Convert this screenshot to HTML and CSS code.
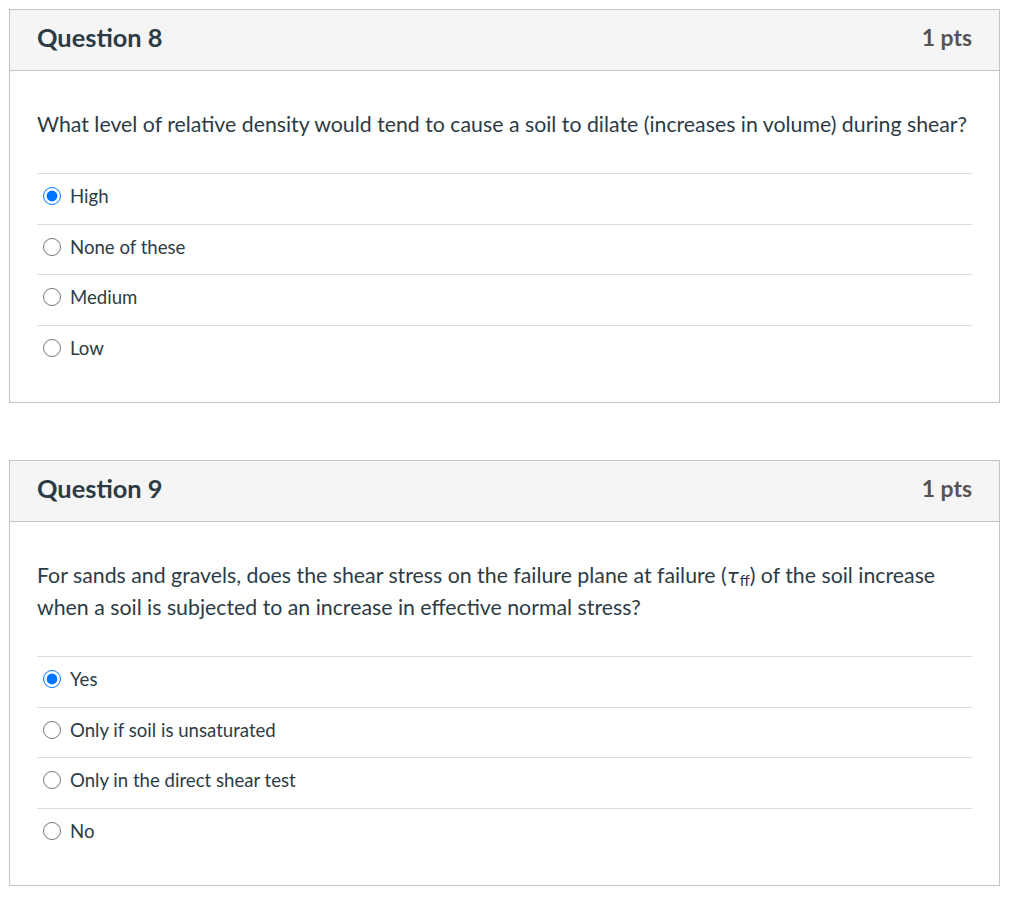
FILE: index.html
```html
<!DOCTYPE html>
<html>
<head>
<meta charset="utf-8">
<link rel="stylesheet" href="styles.css">
</head>
<body>
<div class="page">
  <div class="card">
    <div class="card-header">
      <span class="title">Question 8</span>
      <span class="pts">1 pts</span>
    </div>
    <div class="card-body">
      <p class="question">What level of relative density would tend to cause a soil to dilate (increases in volume) during shear?</p>
      <div class="answers">
        <label class="answer"><input type="radio" name="q8" checked><span>High</span></label>
        <label class="answer"><input type="radio" name="q8"><span>None of these</span></label>
        <label class="answer"><input type="radio" name="q8"><span>Medium</span></label>
        <label class="answer"><input type="radio" name="q8"><span>Low</span></label>
      </div>
    </div>
  </div>
  <div class="card">
    <div class="card-header">
      <span class="title">Question 9</span>
      <span class="pts">1 pts</span>
    </div>
    <div class="card-body">
      <p class="question">For sands and gravels, does the shear stress on the failure plane at failure (<span class="math"><i>τ</i><sub>ff</sub></span>) of the soil increase when a soil is subjected to an increase in effective normal stress?</p>
      <div class="answers">
        <label class="answer"><input type="radio" name="q9" checked><span>Yes</span></label>
        <label class="answer"><input type="radio" name="q9"><span>Only if soil is unsaturated</span></label>
        <label class="answer"><input type="radio" name="q9"><span>Only in the direct shear test</span></label>
        <label class="answer"><input type="radio" name="q9"><span>No</span></label>
      </div>
    </div>
  </div>
</div>
</body>
</html>
```

FILE: styles.css
```css
html, body {
  margin: 0;
  padding: 0;
  background: #fff;
}
body {
  font-family: Lato, "Open Sans", sans-serif;
  color: #2d3b45;
}
.page {
  padding: 9px 0 0 9px;
  display: flex;
  flex-direction: column;
  gap: 57px;
}
.card {
  width: 991px;
  box-sizing: border-box;
  border: 1px solid #c4c4c4;
}
.card-header {
  height: 60px;
  background: #f5f5f5;
  border-bottom: 1px solid #c4c4c4;
  display: flex;
  align-items: center;
  justify-content: space-between;
  padding: 0 27px 0 27px;
}
.title {
  font-size: 25.4px;
  font-weight: 700;
  color: #2d3b45;
  margin-top: -7px;
}
.pts {
  font-size: 22.9px;
  font-weight: 700;
  color: #555;
  margin-top: -7px;
}
.card-body {
  padding: 38px 27px 27px 27px;
}
.question {
  margin: 0 0 33px 0;
  font-size: 21.3px;
  line-height: 31px;
}
.math i {
  font-family: "DejaVu Sans", sans-serif;
  font-style: italic;
  font-size: 20px;
}
.math sub {
  font-size: 15px;
  vertical-align: -3px;
  line-height: 1;
  margin-left: 1px;
}
.answers {
  display: flex;
  flex-direction: column;
}
.answer {
  display: flex;
  align-items: center;
  height: 49.5px;
  border-top: 1px solid #dcdcdc;
  font-size: 18.6px;
  gap: 9px;
}
.answer span {
  margin-top: -5px;
}
.answer input {
  width: 18px;
  height: 18px;
  margin: -5px 0 0 6px;
}
```
